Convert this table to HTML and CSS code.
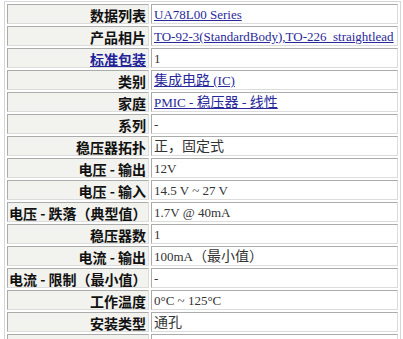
FILE: index.html
```html
<!DOCTYPE html>
<html lang="zh">
<head>
<meta charset="utf-8">
<title>UA78L00 Series</title>
<link rel="stylesheet" href="styles.css">
</head>
<body>
<table class="spec">
  <tr><th>数据列表</th><td><a href="#">UA78L00 Series</a></td></tr>
  <tr><th>产品相片</th><td><a href="#">TO-92-3(StandardBody),TO-226_straightlead</a></td></tr>
  <tr><th><a href="#" class="hlink">标准包装</a></th><td>1</td></tr>
  <tr><th>类别</th><td><a href="#"><span class="cj">集成电路</span> (IC)</a></td></tr>
  <tr><th>家庭</th><td><a href="#">PMIC - <span class="cj">稳压器 - 线性</span></a></td></tr>
  <tr><th>系列</th><td>-</td></tr>
  <tr><th>稳压器拓扑</th><td><span class="cj">正，固定式</span></td></tr>
  <tr><th>电压 - 输出</th><td>12V</td></tr>
  <tr><th>电压 - 输入</th><td>14.5 V ~ 27 V</td></tr>
  <tr><th>电压 - 跌落（典型值）</th><td>1.7V @ 40mA</td></tr>
  <tr><th>稳压器数</th><td>1</td></tr>
  <tr><th>电流 - 输出</th><td>100mA<span class="cj">（最小值）</span></td></tr>
  <tr><th>电流 - 限制（最小值）</th><td>-</td></tr>
  <tr><th>工作温度</th><td>0°C ~ 125°C</td></tr>
  <tr><th>安装类型</th><td><span class="cj">通孔</span></td></tr>
  <tr class="tail"><th></th><td></td></tr>
</table>
</body>
</html>
```
FILE: styles.css
```css
html, body {
  margin: 0;
  padding: 0;
  background: #ffffff;
}
.spec {
  margin: 1px 0 0 4px;
  border: 1px solid #d6d6d6;
  border-spacing: 2px;
  table-layout: fixed;
  width: 397px;
  font-family: "Liberation Serif", "Noto Sans CJK SC", serif;
  font-size: 13px;
}
.spec th, .spec td {
  box-sizing: border-box;
  height: 20px;
  border: 1px solid #ababab;
  border-right-color: #dcdcdc;
  border-bottom-color: #dcdcdc;
  padding: 2px 1px 0 1px;
  line-height: 16px;
  white-space: nowrap;
  vertical-align: middle;
}
.spec th {
  width: 142px;
  text-align: right;
  background: #f2f2ee;
  font-family: "Noto Sans CJK SC", "Liberation Sans", sans-serif;
  font-size: 14px;
  font-weight: 700;
  color: #111111;
  padding-right: 2px;
}
.spec td {
  width: 247px;
  text-align: left;
  color: #333333;
  padding-left: 2px;
}
.spec a {
  color: #28289a;
  text-decoration: underline;
}
.spec .hlink {
  color: #22229a;
}
.cj {
  font-family: "Noto Sans CJK SC", sans-serif;
  font-size: 14px;
  line-height: 12px;
}
```
